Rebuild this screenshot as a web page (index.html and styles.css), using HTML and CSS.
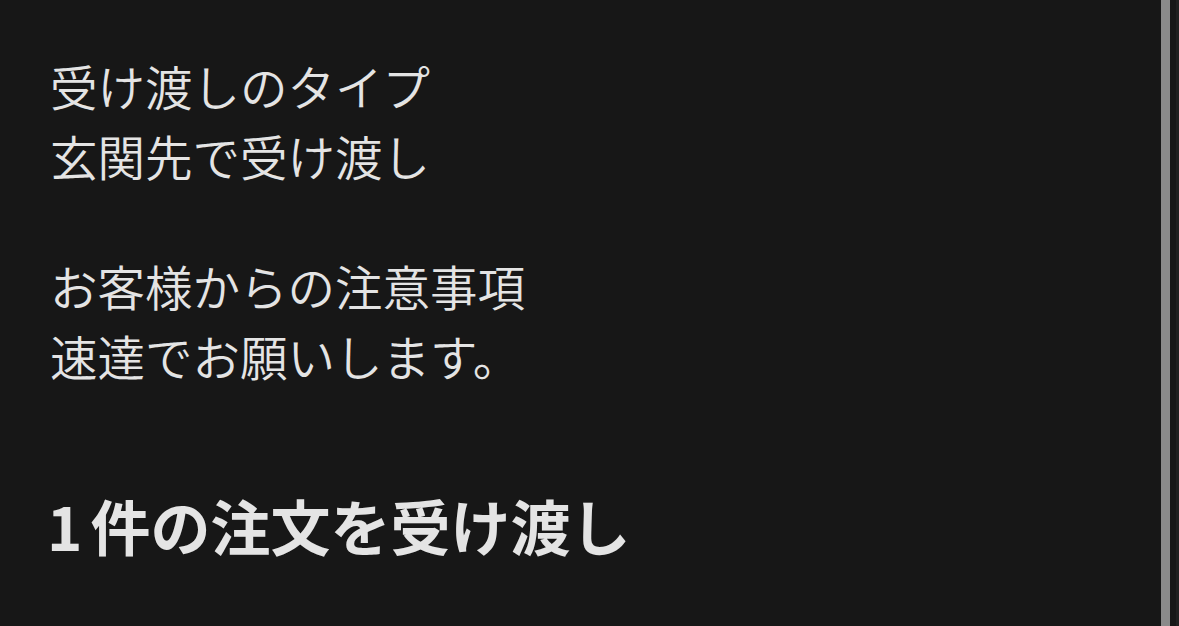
FILE: index.html
```html
<!DOCTYPE html>
<html lang="ja">
<head>
<meta charset="utf-8">
<title>受け渡し</title>
<link rel="stylesheet" href="styles.css">
</head>
<body>
<div class="screen">
  <main class="content">
    <section class="block">
      <p class="line">受け渡しのタイプ</p>
      <p class="line">玄関先で受け渡し</p>
    </section>
    <section class="block">
      <p class="line">お客様からの注意事項</p>
      <p class="line">速達でお願いします。</p>
    </section>
    <h1 class="title"><span class="num">1</span>件の注文を受け渡し</h1>
  </main>
  <div class="scrollbar">
    <div class="thumb"></div>
    <div class="gap"></div>
    <div class="edge"></div>
  </div>
</div>
</body>
</html>
```

FILE: styles.css
```css
html, body {
  margin: 0;
  padding: 0;
  height: 100%;
  background: #171717;
  overflow: hidden;
}
.screen {
  display: flex;
  height: 626px;
  width: 1179px;
}
.content {
  flex: 1;
  display: flex;
  flex-direction: column;
  gap: 60px;
  padding: 51px 0 0 50px;
  color: #e4e4e4;
  font-family: "Noto Sans CJK JP", "Noto Sans", sans-serif;
}
.block {
  margin: 0;
}
.line {
  margin: 0;
  font-size: 47.5px;
  line-height: 70px;
  font-weight: 350;
}
.title {
  margin: 34px 0 0 -3px;
  font-size: 60px;
  line-height: 80px;
  font-weight: 700;
}
.num {
  margin-right: 8px;
}
.scrollbar {
  display: flex;
  width: 18px;
  margin-left: -7px;
}
.thumb {
  width: 9px;
  background: #8a8a8a;
}
.gap {
  width: 6px;
  background: #171717;
}
.edge {
  width: 3px;
  background: #202020;
}
```
